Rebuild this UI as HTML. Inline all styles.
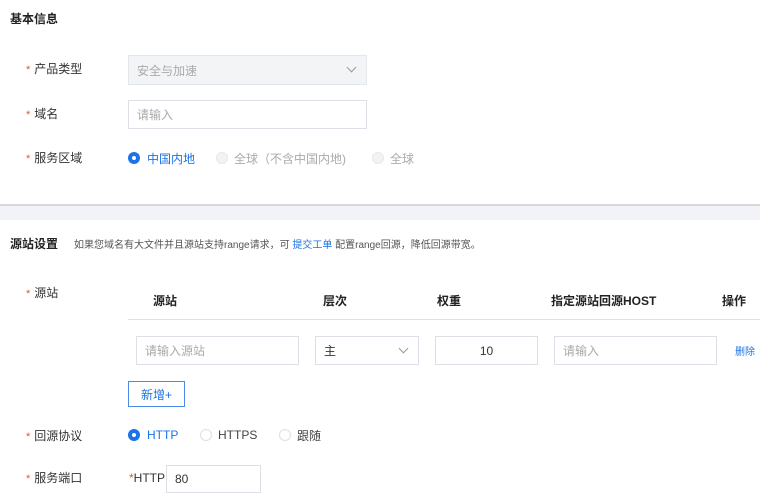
<!DOCTYPE html>
<html><head><meta charset="utf-8"><style>
*{margin:0;padding:0;box-sizing:border-box}
body{width:760px;height:500px;background:#fff;font-family:"Liberation Sans","Noto Sans CJK SC",sans-serif;color:#333;position:relative;overflow:hidden;font-size:12px}
.a{position:absolute;white-space:nowrap}
.lbl{font-size:12px;color:#333}
.lbl i{color:#e5542f;font-style:normal;margin-right:4px;font-size:11px}
.box{position:absolute;border:1px solid #dcdfe6;background:#fff;font-size:12px;color:#aaa;padding-left:8px;display:flex;align-items:center}
.r{position:absolute;width:12px;height:12px;border-radius:50%;border:1px solid #dcdfe6;background:#fff}
.r.on{border:none;background:#1a73e8}
.r.on::after{content:"";position:absolute;left:4px;top:4px;width:4px;height:4px;border-radius:50%;background:#fff}
.r.dis{background:#f2f3f5;border-color:#e6e8eb}
.th{position:absolute;top:292px;font-weight:bold;font-size:12px;color:#222}
.chev{position:absolute;width:7px;height:7px;border-right:1px solid #999;border-bottom:1px solid #999;transform:rotate(45deg)}
</style></head><body>
<div class="a" style="left:10px;top:10px;font-weight:bold;font-size:12px;color:#222">基本信息</div>

<div class="a lbl" style="left:26px;top:60px"><i>*</i>产品类型</div>
<div class="box" style="left:128px;top:55px;width:239px;height:30px;background:#f3f4f6;border-color:#e3e6eb;color:#aaa">安全与加速</div>
<div class="chev" style="left:348px;top:64px"></div>

<div class="a lbl" style="left:26px;top:105px"><i>*</i>域名</div>
<div class="box" style="left:128px;top:100px;width:239px;height:29px">请输入</div>

<div class="a lbl" style="left:26px;top:149px"><i>*</i>服务区域</div>
<div class="r on" style="left:128px;top:152px"></div>
<div class="a" style="left:147px;top:150px;color:#1a73e8">中国内地</div>
<div class="r dis" style="left:216px;top:152px"></div>
<div class="a" style="left:234px;top:150px;color:#aaa">全球（不含中国内地)</div>
<div class="r dis" style="left:372px;top:152px"></div>
<div class="a" style="left:390px;top:150px;color:#aaa">全球</div>

<div class="a" style="left:0;top:204px;width:760px;height:16px;background:#f2f3f6;border-top:2px solid #d6d8dc"></div>

<div class="a" style="left:10px;top:235px;font-weight:bold;font-size:12px;color:#222">源站设置</div>
<div class="a" style="left:74px;top:236px;font-size:10px;color:#555">如果您域名有大文件并且源站支持range请求，可 <span style="color:#1a73e8">提交工单</span> 配置range回源，降低回源带宽。</div>

<div class="a lbl" style="left:26px;top:284px"><i>*</i>源站</div>
<div class="th" style="left:153px">源站</div>
<div class="th" style="left:323px">层次</div>
<div class="th" style="left:437px">权重</div>
<div class="th" style="left:551px">指定源站回源HOST</div>
<div class="th" style="left:722px">操作</div>
<div class="a" style="left:128px;top:319px;width:632px;height:1px;background:#dfe1e6"></div>

<div class="box" style="left:136px;top:336px;width:163px;height:29px">请输入源站</div>
<div class="box" style="left:315px;top:336px;width:104px;height:29px;color:#333">主</div>
<div class="chev" style="left:400px;top:345px"></div>
<div class="box" style="left:435px;top:336px;width:103px;height:29px;color:#333;justify-content:center;padding:0">10</div>
<div class="box" style="left:554px;top:336px;width:163px;height:29px">请输入</div>
<div class="a" style="left:735px;top:343px;font-size:10px;color:#1a73e8">删除</div>

<div class="a" style="left:128px;top:381px;width:57px;height:26px;border:1px solid #4a8ae8;color:#1a73e8;display:flex;align-items:center;justify-content:center">新增+</div>

<div class="a lbl" style="left:26px;top:427px"><i>*</i>回源协议</div>
<div class="r on" style="left:128px;top:429px"></div>
<div class="a" style="left:147px;top:428px;color:#1a73e8">HTTP</div>
<div class="r" style="left:200px;top:429px"></div>
<div class="a" style="left:218px;top:428px;color:#444">HTTPS</div>
<div class="r" style="left:279px;top:429px"></div>
<div class="a" style="left:297px;top:427px;color:#444">跟随</div>

<div class="a lbl" style="left:26px;top:469px"><i>*</i>服务端口</div>
<div class="a" style="left:129px;top:471px;color:#333"><span style="color:#e5542f">*</span>HTTP</div>
<div class="box" style="left:166px;top:465px;width:95px;height:28px;color:#333">80</div>
</body></html>
